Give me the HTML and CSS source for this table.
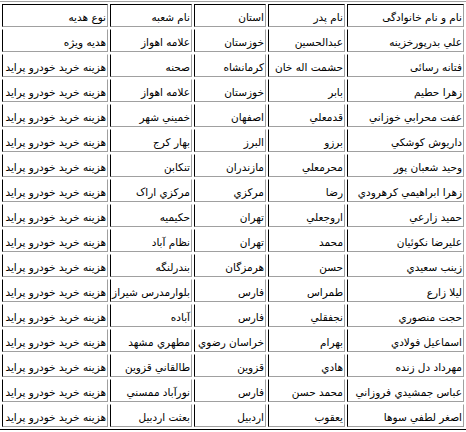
FILE: index.html
```html
<!DOCTYPE html>
<html lang="fa" dir="rtl">
<head>
<meta charset="utf-8">
<link rel="stylesheet" href="styles.css">
</head>
<body>
<table class="grid">
<colgroup>
<col class="c-name"><col class="c-father"><col class="c-prov"><col class="c-branch"><col class="c-gift">
</colgroup>
<thead>
<tr><td>نام و نام خانوادگی</td><td>نام پدر</td><td>استان</td><td>نام شعبه</td><td>نوع هدیه</td></tr>
</thead>
<tbody>
<tr><td>علي بدرپورخزينه</td><td>عبدالحسين</td><td>خوزستان</td><td>علامه اهواز</td><td>هديه ويژه</td></tr>
<tr><td>فتانه رسائی</td><td>حشمت اله خان</td><td>کرمانشاه</td><td>صحنه</td><td>هزينه خريد خودرو پرايد</td></tr>
<tr><td>زهرا حطيم</td><td>بابر</td><td>خوزستان</td><td>علامه اهواز</td><td>هزينه خريد خودرو پرايد</td></tr>
<tr><td>عفت محرابي خوزاني</td><td>قدمعلي</td><td>اصفهان</td><td>خميني شهر</td><td>هزينه خريد خودرو پرايد</td></tr>
<tr><td>داريوش کوشکي</td><td>برزو</td><td>البرز</td><td>بهار کرج</td><td>هزينه خريد خودرو پرايد</td></tr>
<tr><td>وحيد شعبان پور</td><td>محرمعلي</td><td>مازندران</td><td>تنکابن</td><td>هزينه خريد خودرو پرايد</td></tr>
<tr><td>زهرا ابراهيمي کرهرودي</td><td>رضا</td><td>مرکزي</td><td>مرکزي اراک</td><td>هزينه خريد خودرو پرايد</td></tr>
<tr><td>حميد زارعي</td><td>اروجعلي</td><td>تهران</td><td>حکيميه</td><td>هزينه خريد خودرو پرايد</td></tr>
<tr><td>عليرضا نکوئيان</td><td>محمد</td><td>تهران</td><td>نظام آباد</td><td>هزينه خريد خودرو پرايد</td></tr>
<tr><td>زينب سعيدي</td><td>حسن</td><td>هرمزگان</td><td>بندرلنگه</td><td>هزينه خريد خودرو پرايد</td></tr>
<tr><td>ليلا زارع</td><td>طمراس</td><td>فارس</td><td>بلوارمدرس شيراز</td><td>هزينه خريد خودرو پرايد</td></tr>
<tr><td>حجت منصوري</td><td>نجفقلي</td><td>فارس</td><td>آباده</td><td>هزينه خريد خودرو پرايد</td></tr>
<tr><td>اسماعيل فولادي</td><td>بهرام</td><td>خراسان رضوي</td><td>مطهري مشهد</td><td>هزينه خريد خودرو پرايد</td></tr>
<tr><td>مهرداد دل زنده</td><td>هادي</td><td>قزوين</td><td>طالقاني قزوين</td><td>هزينه خريد خودرو پرايد</td></tr>
<tr><td>عباس جمشيدي فروزاني</td><td>محمد حسن</td><td>فارس</td><td>نورآباد ممسني</td><td>هزينه خريد خودرو پرايد</td></tr>
<tr><td>اصغر لطفي سوها</td><td>يعقوب</td><td>اردبيل</td><td>بعثت اردبيل</td><td>هزينه خريد خودرو پرايد</td></tr>
</tbody>
</table>
</body>
</html>
```
FILE: styles.css
```css
html, body {
  margin: 0;
  padding: 0;
  background: #fff;
  overflow: hidden;
}
.grid {
  margin-top: 1px;
  width: 466px;
  table-layout: fixed;
  border-collapse: separate;
  border-spacing: 2px;
  border-top: 1px solid #a0a0a0;
  border-bottom: 1px solid #000;
  border-left: 0;
  border-right: 0;
  font-family: "DejaVu Sans", sans-serif;
  font-size: 10.5px;
  color: #000;
}
.c-name { width: 117px; }
.c-father { width: 77px; }
.c-prov { width: 72px; }
.c-branch { width: 82px; }
.c-gift { width: 106px; }
.grid td {
  box-sizing: border-box;
  height: 23px;
  padding: 3px 1px 0 1px;
  text-align: right;
  vertical-align: middle;
  white-space: nowrap;
  overflow: hidden;
  border-left: 1px solid #000;
  border-right: 1px solid #a0a0a0;
  border-bottom: 1px solid #a0a0a0;
  border-top: 1px solid #fff;
  line-height: 14px;
}
.grid thead td {
  border-top: 1px solid #000;
}
```
